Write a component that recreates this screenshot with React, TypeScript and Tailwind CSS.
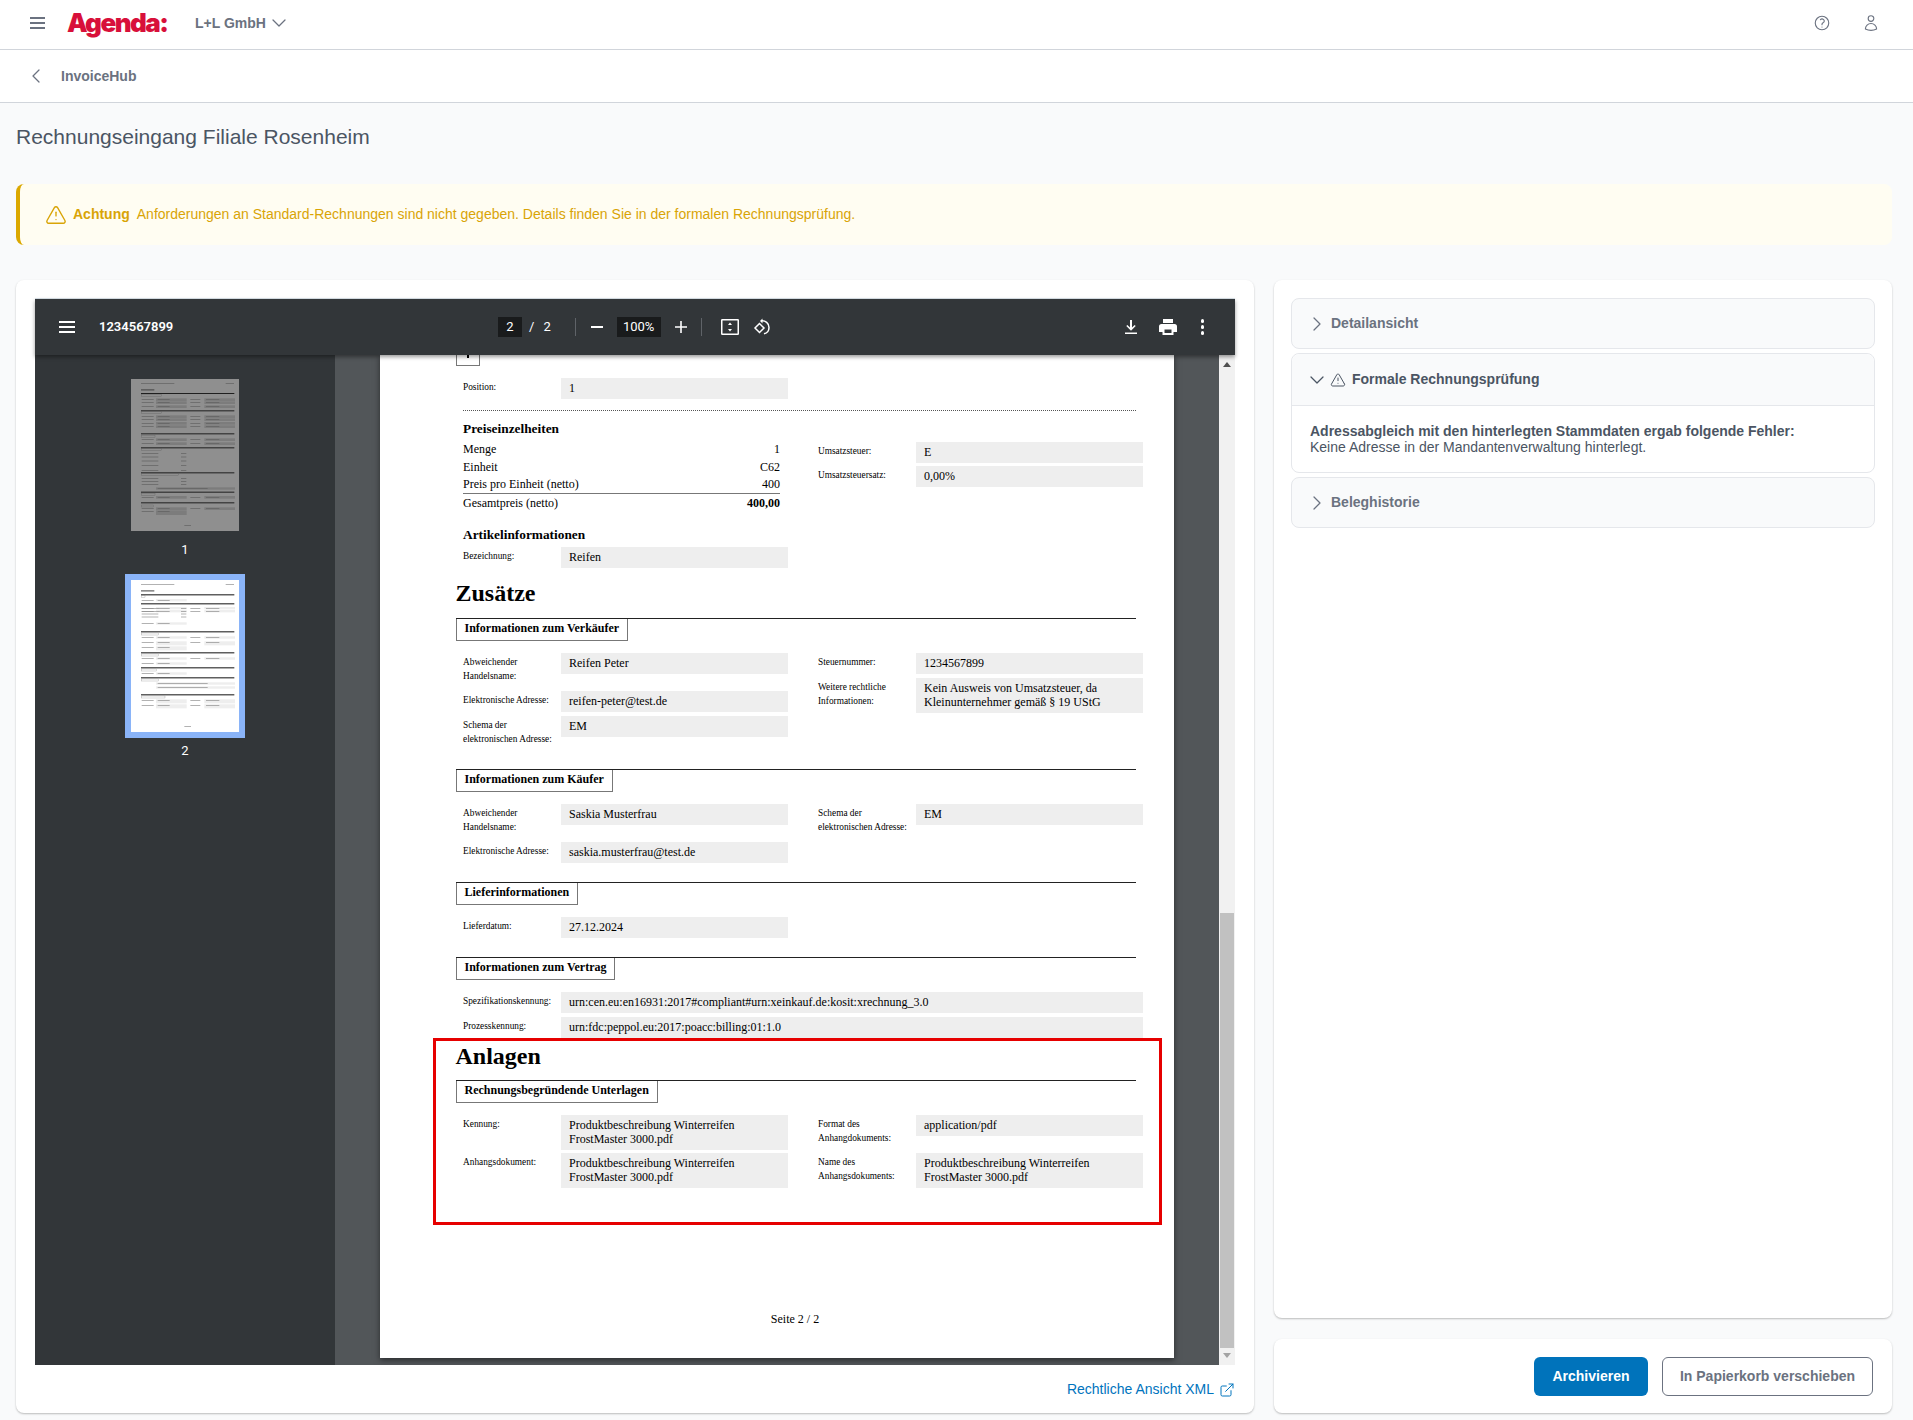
import { ChevronDown, ChevronLeft, ChevronRight, TriangleAlert, ExternalLink } from "lucide-react";
import { HiOutlineQuestionMarkCircle, HiOutlineUser } from "react-icons/hi2";

const serif = "font-['Liberation_Serif',serif] text-black";

function Value({ children, wide = false }: { children: React.ReactNode; wide?: boolean }) {
  return (
    <div className={`${wide ? "w-[582px]" : "w-[227px]"} shrink-0 bg-[#eeeeee] pt-[2.5px] pr-2 pb-[4.5px] pl-2 text-[12px] leading-[14px] whitespace-pre-line`}>
      {children}
    </div>
  );
}

function Row({ label, value, wide }: { label: string; value: string; wide?: boolean }) {
  return (
    <div className="flex items-start">
      <div className="w-[98px] shrink-0 pt-[3px] pr-1 pb-1 text-[9.33px] leading-[13.5px] whitespace-pre-line">{label}</div>
      <Value wide={wide}>{value}</Value>
    </div>
  );
}

function Section({ title, className = "" }: { title: string; className?: string }) {
  return (
    <div className={`border-t-[1.5px] border-[#222222] ${className}`}>
      <div className="h-[22px] w-fit border border-t-0 border-[#777777] px-2 text-[12px] leading-[19px] font-bold">{title}</div>
    </div>
  );
}

function Columns({ left, right, leftGap = "gap-1" }: { left: React.ReactNode; right?: React.ReactNode; leftGap?: string }) {
  return (
    <div className="mt-3 ml-[7.5px] flex gap-[30px]">
      <div className={`flex w-[325px] shrink-0 flex-col ${leftGap}`}>{left}</div>
      <div className="flex w-[325px] shrink-0 flex-col gap-1">{right}</div>
    </div>
  );
}

function PriceRow({ label, value, strong, line }: { label: string; value: string; strong?: boolean; line?: boolean }) {
  return (
    <div className={`flex justify-between ${line ? "h-[18px] border-b border-[#777777] leading-[17px]" : "h-[18px] leading-[18px]"}`}>
      <span>{label}</span>
      <span className={strong ? "font-bold" : ""}>{value}</span>
    </div>
  );
}

function PdfPage() {
  return (
    <div className={`relative ml-[45px] h-[1003px] w-[794px] bg-white shadow-[0_2px_6px_rgba(0,0,0,0.5)] ${serif}`}>
      <div className="ml-[75.5px] w-[680px]">
        <div className="flex h-[11px] w-[24px] justify-center border border-t-0 border-[#777777]">
          <span className="h-[3px] w-[2px] bg-black" />
        </div>

        <div className="mt-3 ml-[7.5px]">
          <Row label="Position:" value="1" />
          <div className="mt-[11px] w-[673px] border-t border-dotted border-[#555555]" />
          <div className="mt-[10px] text-[13.33px] leading-4 font-bold">Preiseinzelheiten</div>
          <div className="flex gap-[30px]">
            <div className="w-[325px] shrink-0 pr-2">
              <div className="mt-[3px] text-[12px]">
                <PriceRow label="Menge" value="1" />
                <PriceRow label="Einheit" value="C62" />
                <PriceRow label="Preis pro Einheit (netto)" value="400" line />
                <PriceRow label="Gesamtpreis (netto)" value="400,00" strong />
              </div>
              <div className="mt-[15px] text-[13.33px] leading-4 font-bold">Artikelinformationen</div>
            </div>
            <div className="mt-[5px] flex w-[325px] shrink-0 flex-col gap-[3px]">
              <Row label="Umsatzsteuer:" value="E" />
              <Row label="Umsatzsteuersatz:" value="0,00%" />
            </div>
          </div>
          <div className="mt-1">
            <Row label="Bezeichnung:" value="Reifen" />
          </div>
        </div>

        <h2 className="mt-[11px] text-[24px] leading-7 font-bold">Zusätze</h2>
        <Section title="Informationen zum Verkäufer" className="mt-[11px]" />
        <Columns
          left={
            <>
              <Row label={"Abweichender\nHandelsname:"} value="Reifen Peter" />
              <Row label="Elektronische Adresse:" value="reifen-peter@test.de" />
              <Row label={"Schema der\nelektronischen Adresse:"} value="EM" />
            </>
          }
          right={
            <>
              <Row label="Steuernummer:" value="1234567899" />
              <Row
                label={"Weitere rechtliche\nInformationen:"}
                value={"Kein Ausweis von Umsatzsteuer, da\nKleinunternehmer gemäß § 19 UStG"}
              />
            </>
          }
        />

        <Section title="Informationen zum Käufer" className="mt-[19px]" />
        <Columns
          left={
            <>
              <Row label={"Abweichender\nHandelsname:"} value="Saskia Musterfrau" />
              <Row label="Elektronische Adresse:" value="saskia.musterfrau@test.de" />
            </>
          }
          right={<Row label={"Schema der\nelektronischen Adresse:"} value="EM" />}
        />

        <Section title="Lieferinformationen" className="mt-[19px]" />
        <Columns left={<Row label="Lieferdatum:" value="27.12.2024" />} />

        <Section title="Informationen zum Vertrag" className="mt-[19px]" />
        <div className="mt-3 ml-[7.5px] flex flex-col gap-1">
          <Row label="Spezifikationskennung:" value="urn:cen.eu:en16931:2017#compliant#urn:xeinkauf.de:kosit:xrechnung_3.0" wide />
          <Row label="Prozesskennung:" value="urn:fdc:peppol.eu:2017:poacc:billing:01:1.0" wide />
        </div>

        <h2 className="mt-1 text-[24px] leading-7 font-bold">Anlagen</h2>
        <Section title="Rechnungsbegründende Unterlagen" className="mt-[10px]" />
        <Columns
          leftGap="gap-[3px]"
          left={
            <>
              <Row label="Kennung:" value={"Produktbeschreibung Winterreifen\nFrostMaster 3000.pdf"} />
              <Row label="Anhangsdokument:" value={"Produktbeschreibung Winterreifen\nFrostMaster 3000.pdf"} />
            </>
          }
          right={
            <>
              <Row label={"Format des\nAnhangdokuments:"} value="application/pdf" />
              <Row label={"Name des\nAnhangsdokuments:"} value={"Produktbeschreibung Winterreifen\nFrostMaster 3000.pdf"} />
            </>
          }
        />
      </div>

      <div className="mt-[124px] pl-[36px] text-center text-[12px] leading-[14px]">Seite 2 / 2</div>

      {/* Markierung */}
      <div className="absolute top-[683px] left-[53px] h-[187px] w-[729px] border-[3px] border-[#e60000]" />
    </div>
  );
}

type ThumbData = {
  lines: number[];
  boxes: [number, number][];
  rows: [number, boolean, number][];
  wide: number[];
  texts: number[];
};

const page1: ThumbData = {
  lines: [42, 94, 163, 205, 280, 338, 370],
  boxes: [[46, 60], [98, 60], [169, 40], [209, 60], [284, 110], [343, 40], [378, 35]],
  rows: [[61, true, 8], [70, true, 8], [82, true, 8], [112, true, 8], [121, true, 8], [132, true, 8], [142, true, 8], [181, true, 8], [193, true, 8], [354, true, 8], [388, true, 8], [397, false, 14]],
  wide: [328],
  texts: [222, 233, 245, 259, 274, 298, 307, 316],
};

const page2: ThumbData = {
  lines: [43, 70, 154, 217, 262, 292, 343],
  boxes: [[47, 10], [159, 50], [222, 50], [267, 45], [297, 50], [348, 70]],
  rows: [[60, false, 7], [84, true, 7], [93, true, 7], [130, false, 7], [172, true, 7], [187, true, 12], [202, false, 12], [235, true, 7], [250, false, 7], [280, false, 7], [361, true, 12], [376, true, 12]],
  wide: [310, 322],
  texts: [85, 93, 101, 110],
};

function Thumb({ data, active }: { data: ThumbData; active?: boolean }) {
  const bar = active ? "#111111" : "#1f1f1f";
  const field = active ? "#eeeeee" : "#7c7c7c";
  const ink = active ? "#8c8c8c" : "#5f5f5f";
  return (
    <svg viewBox="0 0 324 456" className="block h-[152px] w-[108px]" style={{ background: active ? "#ffffff" : "#8f8f8f" }}>
      <rect x="30" y="13" width="100" height="2" fill={ink} />
      <rect x="284" y="13" width="25" height="2" fill={ink} />
      <rect x="30" y="30" width="40" height="5" fill={ink} />
      <rect x="160" y="438" width="20" height="2" fill={ink} />
      {data.lines.map((y) => (
        <rect key={y} x="30" y={y} width="280" height="3" fill={bar} />
      ))}
      {data.boxes.map(([y, w]) => (
        <rect key={y} x="32" y={y} width={w} height="6" fill="none" stroke={ink} strokeWidth="1" />
      ))}
      {data.rows.map(([y, both, h]) => (
        <g key={y}>
          <rect x="32" y={y} width="36" height="2" fill={ink} />
          <rect x="75" y={y - 3} width="92" height={h} fill={field} />
          <rect x="80" y={y} width="36" height="2" fill={ink} />
          {both && (
            <>
              <rect x="178" y={y} width="30" height="2" fill={ink} />
              <rect x="220" y={y - 3} width="92" height={h} fill={field} />
              <rect x="225" y={y} width="40" height="2" fill={ink} />
            </>
          )}
        </g>
      ))}
      {data.wide.map((y) => (
        <g key={y}>
          <rect x="75" y={y - 3} width="237" height="7" fill={field} />
          <rect x="80" y={y} width="150" height="2" fill={ink} />
        </g>
      ))}
      {data.texts.map((y) => (
        <g key={y}>
          <rect x="32" y={y} width="50" height="2" fill={ink} />
          <rect x="150" y={y} width="16" height="2" fill={ink} />
        </g>
      ))}
    </svg>
  );
}

function Toolbar() {
  return (
    <div className="relative z-10 flex h-14 shrink-0 items-center bg-[#323639] text-white shadow-[0_2px_4px_rgba(0,0,0,0.4)]">
      <div className="ml-6 flex w-4 flex-col gap-[3px]">
        <span className="h-[2px] bg-white" />
        <span className="h-[2px] bg-white" />
        <span className="h-[2px] bg-white" />
      </div>
      <span className="ml-[24px] w-[399px] text-[13px] font-semibold font-[Roboto,sans-serif]">1234567899</span>
      <div className="flex h-5 items-center font-[Roboto,sans-serif] text-[13px]">
        <span className="flex h-5 w-6 items-center justify-center bg-[#191b1c]">2</span>
        <span className="ml-[7px]">/</span>
        <span className="ml-[9px]">2</span>
        <span className="ml-[24px] h-[18px] w-px bg-[#5f6368]" />
        <span className="ml-[15px] h-[2px] w-3 bg-white" />
        <span className="ml-[14px] flex h-5 w-11 items-center justify-center bg-[#191b1c]">100%</span>
        <svg viewBox="0 0 14 14" className="ml-[13px] h-[14px] w-[14px]" fill="none" stroke="white" strokeWidth="1.6">
          <path d="M7 1v12M1 7h12" />
        </svg>
        <span className="ml-[13px] h-[18px] w-px bg-[#5f6368]" />
        <svg viewBox="0 0 18 16" className="ml-[19px] h-4 w-[18px]" fill="none" stroke="white" strokeWidth="1.5">
          <rect x="0.75" y="0.75" width="16.5" height="14.5" rx="0.5" />
          <path d="M9 3.5 7 6h4zM9 12.5 7 10h4z" fill="white" stroke="none" />
        </svg>
        <svg viewBox="0 0 18 18" className="ml-[14px] h-[18px] w-[18px]" fill="none" stroke="white" strokeWidth="1.5">
          <path d="M6.5 5.5 2 10l4.500 4.500L11 10z" />
          <path d="M8 2.800c4.500-.6 8 2.400 8 6.600 0 3-2 5.600-5 6.400" />
          <path d="M9.500 0.500 7 3l2.500 2.500z" fill="white" stroke="none" />
        </svg>
      </div>
      <div className="mr-[31px] ml-auto flex items-center">
        <svg viewBox="0 0 14 16" className="h-4 w-[14px]" fill="white">
          <path d="M6 1h2v7.500l2.600-2.600 1.100 1.100L7 11.700 2.300 7l1.100-1.100L6 8.500zM1 13.600h12V15H1z" />
        </svg>
        <svg viewBox="0 0 18 18" className="ml-[21px] h-[18px] w-[18px]" fill="white">
          <path d="M4 1h10v4H4zM2.500 6h13A2.500 2.500 0 0 1 18 8.500V14h-3.500v3h-11v-3H0V8.500A2.500 2.500 0 0 1 2.500 6zM5.500 11.500V15h7v-3.500z" />
        </svg>
        <div className="ml-[24px] flex flex-col gap-[2.5px]">
          <span className="h-[3.5px] w-[3.5px] rounded-full bg-white" />
          <span className="h-[3.5px] w-[3.5px] rounded-full bg-white" />
          <span className="h-[3.5px] w-[3.5px] rounded-full bg-white" />
        </div>
      </div>
    </div>
  );
}

function PdfViewer() {
  return (
    <div className="flex h-[1067px] flex-col border-t border-[#dbe3ea]">
      <Toolbar />
      <div className="flex min-h-0 flex-1 overflow-hidden">
        <div className="flex w-[300px] shrink-0 flex-col items-center bg-[#323639] pt-6 text-white">
          <Thumb data={page1} />
          <span className="mt-[11px] font-[Roboto,sans-serif] text-[13px] leading-4">1</span>
          <div className="mt-4 border-[6px] border-[#8ab4f8]">
            <Thumb data={page2} active />
          </div>
          <span className="mt-[5px] font-[Roboto,sans-serif] text-[13px] leading-4">2</span>
        </div>
        <div className="min-w-0 flex-1 bg-[#525659]">
          <PdfPage />
        </div>
        <div className="flex w-4 shrink-0 flex-col items-center bg-[#f1f1f1]">
          <span className="mt-[7px] h-0 w-0 border-x-[4px] border-b-[5px] border-x-transparent border-b-[#505050]" />
          <span className="mt-[546px] h-[435px] w-[14px] bg-[#c1c1c1]" />
          <span className="mt-[5px] h-0 w-0 border-x-[4px] border-t-[5px] border-x-transparent border-t-[#a3a3a3]" />
        </div>
      </div>
    </div>
  );
}

function AccordionHead({ title }: { title: string }) {
  return (
    <div className="flex h-[51px] items-center rounded-lg border border-[#e5e7eb] bg-[#f9fafb] pl-[13px] text-[14px] font-bold text-[#6b7280]">
      <ChevronRight className="h-6 w-6" strokeWidth={1.25} />
      <span className="ml-[2px]">{title}</span>
    </div>
  );
}

export default function App() {
  return (
    <div className="h-[1420px] overflow-hidden bg-[#f9fafb] font-['Liberation_Sans',sans-serif]">
      {/* Kopfzeile */}
      <header className="flex h-[50px] items-center border-b border-[#d1d5db] bg-white pr-[33px] pb-[3px] text-[#6b7280]">
        <div className="ml-[30px] flex w-[15px] flex-col gap-[3px]">
          <span className="h-[2px] bg-[#6b7280]" />
          <span className="h-[2px] bg-[#6b7280]" />
          <span className="h-[2px] bg-[#6b7280]" />
        </div>
        <span className="ml-[22px] w-[128px] font-[Inter,sans-serif] text-[26px] leading-none font-black tracking-[-1.5px] text-[#d8103a]">Agenda:</span>
        <span className="text-[14px] font-bold">L+L GmbH</span>
        <ChevronDown className="ml-[1px] h-6 w-6" strokeWidth={1.25} />
        <HiOutlineQuestionMarkCircle className="ml-auto h-[18px] w-[18px]" />
        <HiOutlineUser className="ml-[31px] h-[18px] w-[18px]" />
      </header>
      <div className="flex h-[53px] items-center border-b border-[#d1d5db] bg-white text-[#6b7280]">
        <ChevronLeft className="ml-6 h-6 w-6" strokeWidth={1.25} />
        <span className="ml-[13px] text-[14px] font-bold">InvoiceHub</span>
      </div>

      <div className="pr-[21px] pl-4">
        <h1 className="mt-5 text-[21px] leading-7 text-[#4b5563]">Rechnungseingang Filiale Rosenheim</h1>

        <div className="mt-[33px] flex h-[61px] items-center rounded-lg border-l-4 border-[#dba800] bg-[#fffdf2] pl-[25px] text-[14px] text-[#d9a406]">
          <TriangleAlert className="h-[22px] w-[22px]" strokeWidth={1.5} />
          <span className="ml-[6px] font-bold">Achtung</span>
          <span className="ml-[7px]">Anforderungen an Standard-Rechnungen sind nicht gegeben. Details finden Sie in der formalen Rechnungsprüfung.</span>
        </div>

        <div className="mt-[35px] grid grid-cols-[1238px_618px] gap-x-5">
          <div className="h-[1133px] rounded-lg bg-white px-[19px] pt-[18px] shadow-[0_1px_2px_rgba(0,0,0,0.25)]">
            <PdfViewer />
            <div className="mt-[14px] flex items-center justify-end text-[14px] text-[#0074bd]">
              Rechtliche Ansicht XML
              <ExternalLink className="ml-[5px] h-4 w-4" strokeWidth={1.5} />
            </div>
          </div>

          <div className="flex flex-col gap-[21px]">
            <div className="flex h-[1038px] flex-col gap-1 rounded-lg bg-white px-[17px] pt-[18px] shadow-[0_1px_2px_rgba(0,0,0,0.25)]">
              <AccordionHead title="Detailansicht" />
              <div className="rounded-lg border border-[#e5e7eb]">
                <div className="flex h-[52px] items-center rounded-t-lg border-b border-[#e5e7eb] bg-[#f9fafb] pl-[13px] text-[14px] font-bold text-[#4b5563]">
                  <ChevronDown className="h-6 w-6" strokeWidth={1.25} />
                  <TriangleAlert className="ml-[1px] h-4 w-4" strokeWidth={1.5} />
                  <span className="ml-[6px]">Formale Rechnungsprüfung</span>
                </div>
                <div className="px-[18px] py-[17px] text-[14px] leading-4 text-[#4b5563]">
                  <div className="font-bold">Adressabgleich mit den hinterlegten Stammdaten ergab folgende Fehler:</div>
                  <div>Keine Adresse in der Mandantenverwaltung hinterlegt.</div>
                </div>
              </div>
              <AccordionHead title="Beleghistorie" />
            </div>
            <div className="flex h-[74px] items-center justify-end gap-[14px] rounded-lg bg-white pr-[19px] shadow-[0_1px_2px_rgba(0,0,0,0.25)]">
              <button className="h-[39px] w-[114px] rounded-md bg-[#0073bb] text-[14px] font-bold text-white">Archivieren</button>
              <button className="h-[39px] w-[211px] rounded-md border border-[#6b7280] bg-white text-[14px] font-bold text-[#6b7280]">In Papierkorb verschieben</button>
            </div>
          </div>
        </div>
      </div>
    </div>
  );
}
